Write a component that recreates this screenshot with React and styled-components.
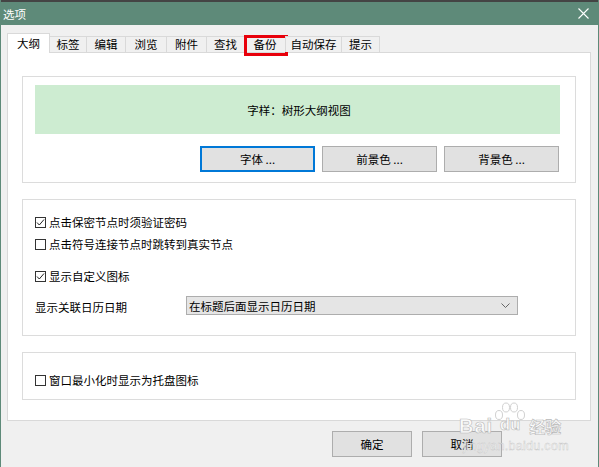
import React from "react";
import styled, { createGlobalStyle } from "styled-components";

const Global = createGlobalStyle`
  html, body { margin: 0; padding: 0; background: #f0f0f0; }
  * { box-sizing: border-box; }
  body { font-family: "Noto Sans CJK SC", "Noto Sans", sans-serif; font-size: 11.5px; color: #000; }
`;

const Window = styled.div`
  position: relative;
  width: 599px;
  height: 467px;
  background: #f0f0f0;
  border-left: 1px solid #5e8a79;
  border-right: 1px solid #5e8a79;
  overflow: hidden;
  display: flex;
  flex-direction: column;
`;

const TitleBar = styled.div`
  height: 25px;
  flex: none;
  background: #5e8a79;
  border-top: 2px solid #444;
  display: flex;
  align-items: center;
  justify-content: space-between;
  padding: 0 9px 0 2px;
  color: #fff;
  font-size: 11.5px;
`;

const Close = styled.svg`
  width: 11px;
  height: 11px;
  display: block;
`;

const Body = styled.div`
  padding: 8px 0 0 6px;
  display: flex;
  flex-direction: column;
`;

const TabBar = styled.div`
  display: flex;
  align-items: flex-end;
  height: 19px;
  position: relative;
  z-index: 1;
`;

const Tab = styled.div`
  position: relative;
  width: ${(p) => p.$w}px;
  height: ${(p) => (p.$active ? 20 : 16)}px;
  margin-bottom: ${(p) => (p.$active ? -1 : 0)}px;
  margin-right: -1px;
  background: ${(p) => (p.$active ? "#fff" : "#f0f0f0")};
  border: 1px solid #d9d9d9;
  border-bottom: none;
  display: flex;
  align-items: center;
  justify-content: center;
  font-size: 11.5px;
  line-height: 1;
  padding-top: ${(p) => (p.$active ? 0 : 1)}px;
  z-index: ${(p) => (p.$active ? 2 : 1)};
`;

const RedMark = styled.div`
  position: absolute;
  left: -1px;
  top: -2px;
  width: 44px;
  height: 21px;
  border: 3px solid #e8000b;
  pointer-events: none;
`;

const Panel = styled.div`
  width: 584px;
  height: 369px;
  background: #fff;
  border: 1px solid #d9d9d9;
  padding: 23px 14px 0 14px;
  display: flex;
  flex-direction: column;
`;

const Group = styled.div`
  border: 1px solid #dcdcdc;
  height: ${(p) => p.$h}px;
  margin-top: ${(p) => p.$mt || 0}px;
  padding: ${(p) => p.$pad};
  display: flex;
  flex-direction: column;
  flex: none;
`;

const Preview = styled.div`
  height: 49px;
  background: #cdecd1;
  display: flex;
  align-items: center;
  justify-content: center;
  padding-left: 3px;
`;

const ButtonRow = styled.div`
  display: flex;
  justify-content: flex-end;
  gap: 7px;
  margin-top: 12px;
  padding-right: 1px;
`;

const Button = styled.button`
  width: ${(p) => p.$w}px;
  height: 26px;
  background: #e1e1e1;
  border: ${(p) => (p.$focus ? "2px solid #0078d7" : "1px solid #adadad")};
  font-family: inherit;
  font-size: 11.5px;
  color: #000;
  padding: 0;
  display: flex;
  align-items: center;
  justify-content: center;
`;

const CheckRow = styled.label`
  display: flex;
  align-items: center;
  height: 20px;
  margin-top: ${(p) => p.$mt || 0}px;
`;

const Box = styled.span`
  width: 11px;
  height: 11px;
  border: 1px solid #333;
  background: #fff;
  margin-right: 3px;
  display: flex;
  align-items: center;
  justify-content: center;
  flex: none;
`;

const SelectRow = styled.div`
  display: flex;
  align-items: center;
  margin-top: ${(p) => p.$mt || 0}px;
`;

const SelectLabel = styled.span`
  width: 151px;
  padding-top: 3px;
`;

const Select = styled.div`
  width: 332px;
  height: 19px;
  background: #e5e5e5;
  border: 1px solid #adadad;
  display: flex;
  align-items: center;
  justify-content: space-between;
  padding: 0 7px 0 2px;
`;

const Footer = styled.div`
  display: flex;
  justify-content: flex-end;
  gap: 10px;
  margin-top: 10px;
  padding-right: 96px;
`;

const Watermark = styled.div`
  position: absolute;
  left: 458px;
  top: 402px;
  width: 120px;
  color: rgba(255, 255, 255, 0.85);
  pointer-events: none;
  font-family: "Liberation Sans", Arial, sans-serif;
`;

const MarkTop = styled.div`
  display: flex;
  align-items: flex-end;
  height: 34px;
`;

const MarkBig = styled.span`
  font-size: 20px;
  font-weight: bold;
  line-height: 20px;
  -webkit-text-stroke: 0.6px #b8b8b8;
  letter-spacing: 1px;
`;

const MarkCn = styled.span`
  font-family: "Noto Sans CJK SC", sans-serif;
  font-size: 16px;
  font-weight: bold;
  line-height: 20px;
  -webkit-text-stroke: 0.6px #b8b8b8;
  margin-left: 2px;
`;

const Paw = styled.span`
  position: relative;
  width: 34px;
  height: 34px;
  display: flex;
  align-items: flex-end;
  justify-content: center;
`;

const PawSvg = styled.svg`
  position: absolute;
  left: 0;
  top: 0;
`;

const PawText = styled(MarkBig)`
  position: relative;
  font-size: 17px;
  letter-spacing: 0;
  padding-bottom: 1px;
`;

const MarkUrl = styled.div`
  font-size: 12.5px;
  margin-top: 3px;
  padding-left: 4px;
  color: rgba(255, 255, 255, 0.85);
  -webkit-text-stroke: 0.4px #c4c4c4;
  letter-spacing: 0.3px;
`;

const Check = ({ on }) => (
  <Box>
    {on && (
      <svg width="9" height="9" viewBox="0 0 9 9">
        <polyline points="1,4.5 3.3,7 8,1.5" fill="none" stroke="#222" strokeWidth="1" />
      </svg>
    )}
  </Box>
);

const tabs = [
  ["大纲", 43, true],
  ["标签", 38],
  ["编辑", 40],
  ["浏览", 42],
  ["附件", 41],
  ["查找", 39],
  ["备份", 42, false, true],
  ["自动保存", 57],
  ["提示", 39],
];

export default function App() {
  return (
    <>
      <Global />
      <Window>
        <TitleBar>
          <span>选项</span>
          <Close viewBox="0 0 11 11">
            <path d="M0.5 0.5 L10.5 10.5 M10.5 0.5 L0.5 10.5" stroke="#fff" strokeWidth="1.1" />
          </Close>
        </TitleBar>
        <Body>
          <TabBar>
            {tabs.map(([t, w, active, mark]) => (
              <Tab key={t} $w={w} $active={active}>
                {t}
                {mark && <RedMark />}
              </Tab>
            ))}
          </TabBar>
          <Panel>
            <Group $h={107} $pad="8px 15px 0 12px">
              <Preview>字样：树形大纲视图</Preview>
              <ButtonRow>
                <Button $w={115} $focus>字体 ...</Button>
                <Button $w={115}>前景色 ...</Button>
                <Button $w={115}>背景色 ...</Button>
              </ButtonRow>
            </Group>
            <Group $h={137} $mt={16} $pad="12px 12px 0 12px">
              <CheckRow><Check on />点击保密节点时须验证密码</CheckRow>
              <CheckRow $mt={2}><Check />点击符号连接节点时跳转到真实节点</CheckRow>
              <CheckRow $mt={12}><Check on />显示自定义图标</CheckRow>
              <SelectRow $mt={10}>
                <SelectLabel>显示关联日历日期</SelectLabel>
                <Select>
                  <span>在标题后面显示日历日期</span>
                  <svg width="9" height="5" viewBox="0 0 9 5">
                    <polyline points="0.5,0.5 4.5,4.5 8.5,0.5" fill="none" stroke="#666" strokeWidth="1" />
                  </svg>
                </Select>
              </SelectRow>
            </Group>
            <Group $h={48} $mt={16} $pad="17px 12px 0 12px">
              <CheckRow><Check />窗口最小化时显示为托盘图标</CheckRow>
            </Group>
          </Panel>
          <Footer>
            <Button $w={80}>确定</Button>
            <Button $w={80}>取消</Button>
          </Footer>
        </Body>
        <Watermark>
          <MarkTop>
            <MarkBig>Bai</MarkBig>
            <Paw>
              <PawSvg width="34" height="34" viewBox="0 0 34 34">
                <g fill="rgba(255,255,255,0.6)" stroke="#c4c4c4" strokeWidth="0.8">
                  <ellipse cx="6" cy="13" rx="3.5" ry="4.5" />
                  <ellipse cx="13" cy="5.5" rx="3.5" ry="4.5" />
                  <ellipse cx="21" cy="5.5" rx="3.5" ry="4.5" />
                  <ellipse cx="28" cy="13" rx="3.5" ry="4.5" />
                </g>
              </PawSvg>
              <PawText>du</PawText>
            </Paw>
            <MarkCn>经验</MarkCn>
          </MarkTop>
          <MarkUrl>jingyan.baidu.com</MarkUrl>
        </Watermark>
      </Window>
    </>
  );
}
